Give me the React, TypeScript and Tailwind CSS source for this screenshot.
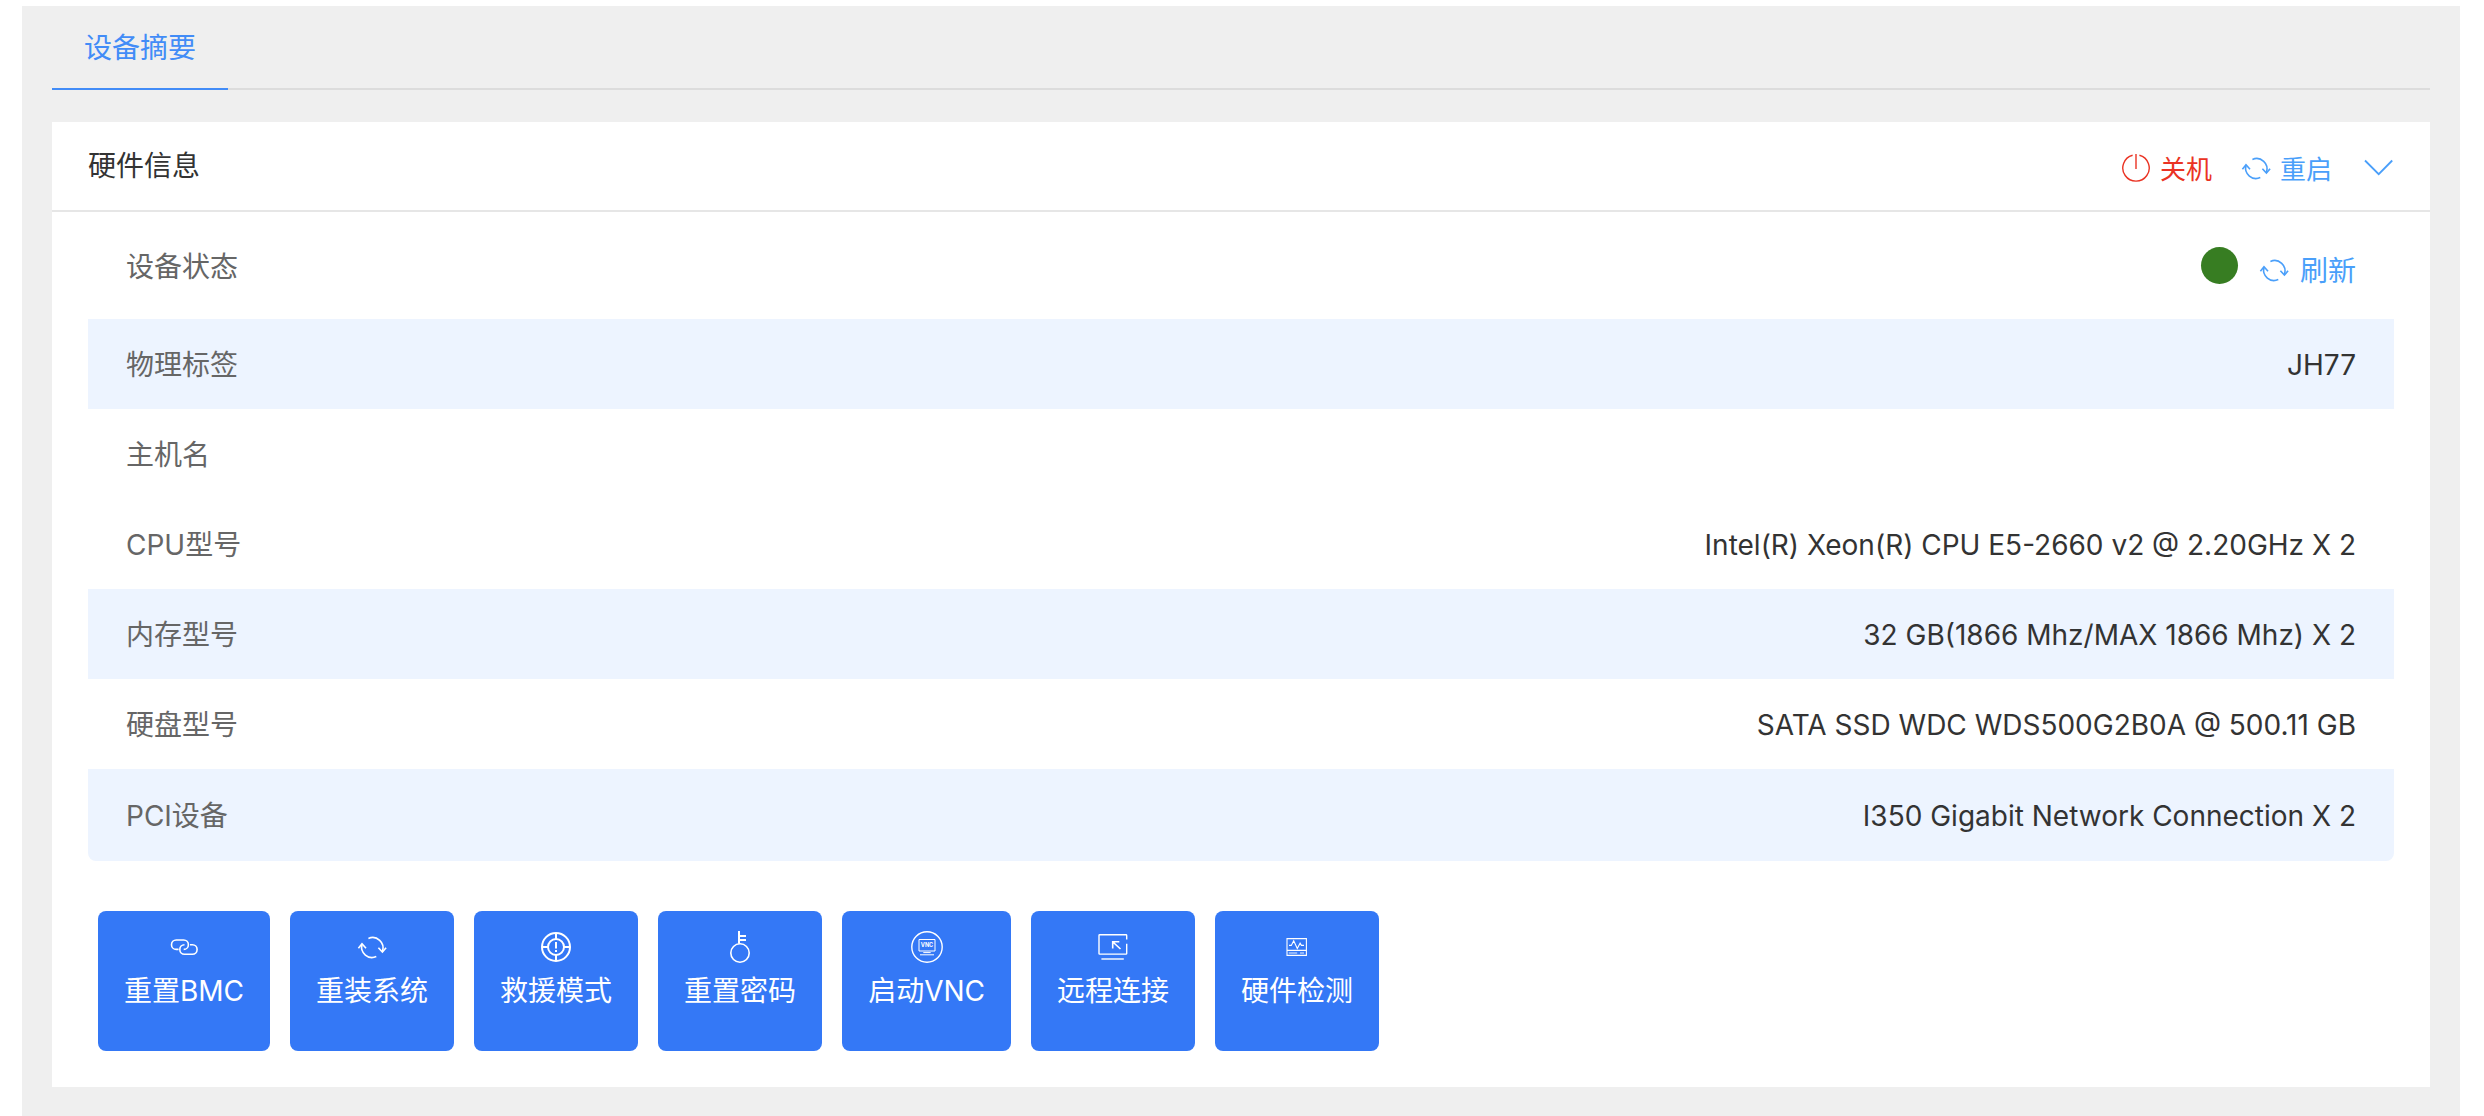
import { useState } from "react";
import type { ReactNode } from "react";
import clsx from "clsx";

const FONT = "font-[Inter,'Noto_Sans_CJK_SC',sans-serif]";

function Icon({ children }: { children: ReactNode }) {
    return (
        <svg
            viewBox="0 0 32 32"
            fill="none"
            stroke="currentColor"
            strokeWidth="1.6"
            className="w-8 h-8 flex-shrink-0"
            aria-hidden="true"
        >
            {children}
        </svg>
    );
}

function RefreshIcon() {
    return (
        <Icon>
            <path d="M6 13.5A10.4 10.4 0 0 0 20.3 25.6" />
            <path d="M2.4 17.2 6 12.8l4 4.4" />
            <path d="M12.4 7.4A10.4 10.4 0 0 1 26.4 20.4" />
            <path d="m22.4 16.8 4 4.3 3.7-4.3" />
        </Icon>
    );
}

function PowerIcon() {
    return (
        <svg viewBox="0 0 28 28" fill="none" stroke="currentColor" strokeWidth="1.4" className="w-7 h-7" aria-hidden="true">
            <path d="M10.6 1.2a13.2 13.2 0 1 0 6.8 0" />
            <path d="M14 0v15" />
        </svg>
    );
}

function ChevronIcon() {
    return (
        <svg viewBox="0 0 30 28" fill="none" stroke="currentColor" strokeWidth="1.8" className="w-[30px] h-7" aria-hidden="true">
            <path d="m1 6.5 13.7 13.7L28.2 6.5" />
        </svg>
    );
}

function LinkIcon() {
    return (
        <Icon>
            <path d="M10.6 18.4H8.2a4.7 4.7 0 0 1 0-9.4h7.5a4.7 4.7 0 0 1 0 9.4" />
            <path d="M22 13.8h2.4a4.7 4.7 0 0 1 0 9.4h-7.9a4.7 4.7 0 0 1 0-9.4" />
        </Icon>
    );
}

function RescueIcon() {
    return (
        <Icon>
            <g strokeWidth="2">
                <circle cx="16" cy="16" r="14" />
                <circle cx="16" cy="16" r="8" />
                <path d="M16 2v6M16 24v6M2 16h6M24 16h6M16 11v6.5M16 19v2" />
            </g>
        </Icon>
    );
}

function KeyIcon() {
    return (
        <Icon>
            <circle cx="16" cy="22" r="9.2" />
            <path d="M15 0v12.8M15 5h7M15 9h7" strokeWidth="2" />
        </Icon>
    );
}

function VncIcon() {
    return (
        <Icon>
            <circle cx="16" cy="16" r="15.2" strokeWidth="1.4" />
            <path d="M8 8.5h16v11.5H8zM12.3 21.6h7.4M9 23.8h14" strokeWidth="1" />
            <text x="16" y="16.2" textAnchor="middle" fontSize="5.5" fontWeight="700" fill="currentColor" stroke="none">
                VNC
            </text>
        </Icon>
    );
}

function RemoteIcon() {
    return (
        <Icon>
            <path d="M29.7 8.4V4.4q0-.7-.7-.7H2.7q-.7 0-.7.7v18q0 .7.7.7H29q.7 0 .7-.7v-9.6" strokeWidth="1.4" />
            <path d="M15.7 17.4v-6.6h6.6M15.9 11l7.6 7" />
            <path d="M4.4 28h22.4" strokeWidth="2" opacity="0.7" />
        </Icon>
    );
}

function CheckIcon() {
    return (
        <Icon>
            <path d="M6 7.6h19.4v16.8H6zM6 19.4h19.4" strokeWidth="1.1" />
            <path d="M8 14.4h2.3l2.4-4.6 3.6 7.8 2.8-5.4 1.3 2.2H23" strokeWidth="1.1" />
            <path d="M7.8 22h8.4M19 22h4" strokeWidth="1.6" opacity="0.6" />
        </Icon>
    );
}

const rows = [
    { label: "物理标签", value: "JH77", striped: true },
    { label: "主机名", value: "" },
    { label: "CPU型号", value: "Intel(R) Xeon(R) CPU E5-2660 v2 @ 2.20GHz X 2" },
    { label: "内存型号", value: "32 GB(1866 Mhz/MAX 1866 Mhz) X 2", striped: true },
    { label: "硬盘型号", value: "SATA SSD WDC WDS500G2B0A @ 500.11 GB" },
    { label: "PCI设备", value: "I350 Gigabit Network Connection X 2", striped: true },
];

const actions = [
    { label: "重置BMC", icon: <LinkIcon /> },
    { label: "重装系统", icon: <RefreshIcon /> },
    { label: "救援模式", icon: <RescueIcon /> },
    { label: "重置密码", icon: <KeyIcon /> },
    { label: "启动VNC", icon: <VncIcon /> },
    { label: "远程连接", icon: <RemoteIcon /> },
    { label: "硬件检测", icon: <CheckIcon /> },
];

export default function App() {
    const [open, setOpen] = useState(true);

    return (
        <div className={clsx(FONT, "min-h-screen flex flex-col bg-white pt-1.5 pl-[22px] pr-6 text-[28px] leading-10 text-[#333]")}>
            <main className="flex-1 bg-[#efefef] px-[30px] pb-7">
                <div role="tablist" className="flex border-b-2 border-[#dcdcdc]">
                    <button
                        role="tab"
                        aria-selected="true"
                        className="-mb-0.5 px-8 pt-[22px] pb-5 border-b-2 border-[#428cf7] text-[#428cf7]"
                    >
                        设备摘要
                    </button>
                </div>

                <section className="mt-8 bg-white pb-9">
                    <header className="flex items-center justify-between px-9 py-6 border-b-2 border-[#e6e6e6]">
                        <h2>硬件信息</h2>
                        <div className="flex items-center pt-1 text-[26px] leading-8 text-[#4a9ffa]">
                            <button className="flex items-center gap-2.5 text-[#ea3323]">
                                <PowerIcon />
                                <span className="pt-1">关机</span>
                            </button>
                            <button className="flex items-center gap-2 ml-7">
                                <RefreshIcon />
                                <span className="pt-1">重启</span>
                            </button>
                            <button aria-label="展开" aria-expanded={open} onClick={() => setOpen(!open)} className="ml-8">
                                <ChevronIcon />
                            </button>
                        </div>
                    </header>

                    {open && (
                        <div className="px-9">
                            <table className="w-full">
                                <tbody>
                                    <tr className="h-[107px]">
                                        <th scope="row" className="pl-[38px] pt-0.5 text-left font-normal text-[#666]">设备状态</th>
                                        <td className="pr-[38px]">
                                            <div className="flex items-center justify-end gap-5">
                                                <span className="w-[37px] h-[37px] rounded-full bg-[#377d22]" />
                                                <button className="flex items-center gap-2.5 pt-2 text-[#4a9ffa]">
                                                    <RefreshIcon />
                                                    <span className="pt-0.5">刷新</span>
                                                </button>
                                            </div>
                                        </td>
                                    </tr>
                                    {rows.map((row) => (
                                        <tr key={row.label} className="group h-[90px] last:h-[92px]">
                                            <th
                                                scope="row"
                                                className={clsx(
                                                    "pl-[38px] pt-0.5 text-left font-normal text-[#666] group-last:rounded-bl-lg",
                                                    row.striped && "bg-[#edf4ff]"
                                                )}
                                            >
                                                {row.label}
                                            </th>
                                            <td
                                                className={clsx(
                                                    "pr-[38px] pt-0.5 text-right group-last:rounded-br-lg",
                                                    row.striped && "bg-[#edf4ff]"
                                                )}
                                            >
                                                {row.value}
                                            </td>
                                        </tr>
                                    ))}
                                </tbody>
                            </table>

                            <div className="flex flex-wrap gap-5 mt-[50px] px-2.5">
                                {actions.map((action) => (
                                    <button
                                        key={action.label}
                                        className="flex flex-col items-center gap-2 px-[26px] pt-5 pb-10 rounded-lg bg-[#3478f6] text-white"
                                    >
                                        {action.icon}
                                        <span>{action.label}</span>
                                    </button>
                                ))}
                            </div>
                        </div>
                    )}
                </section>
            </main>
        </div>
    );
}
